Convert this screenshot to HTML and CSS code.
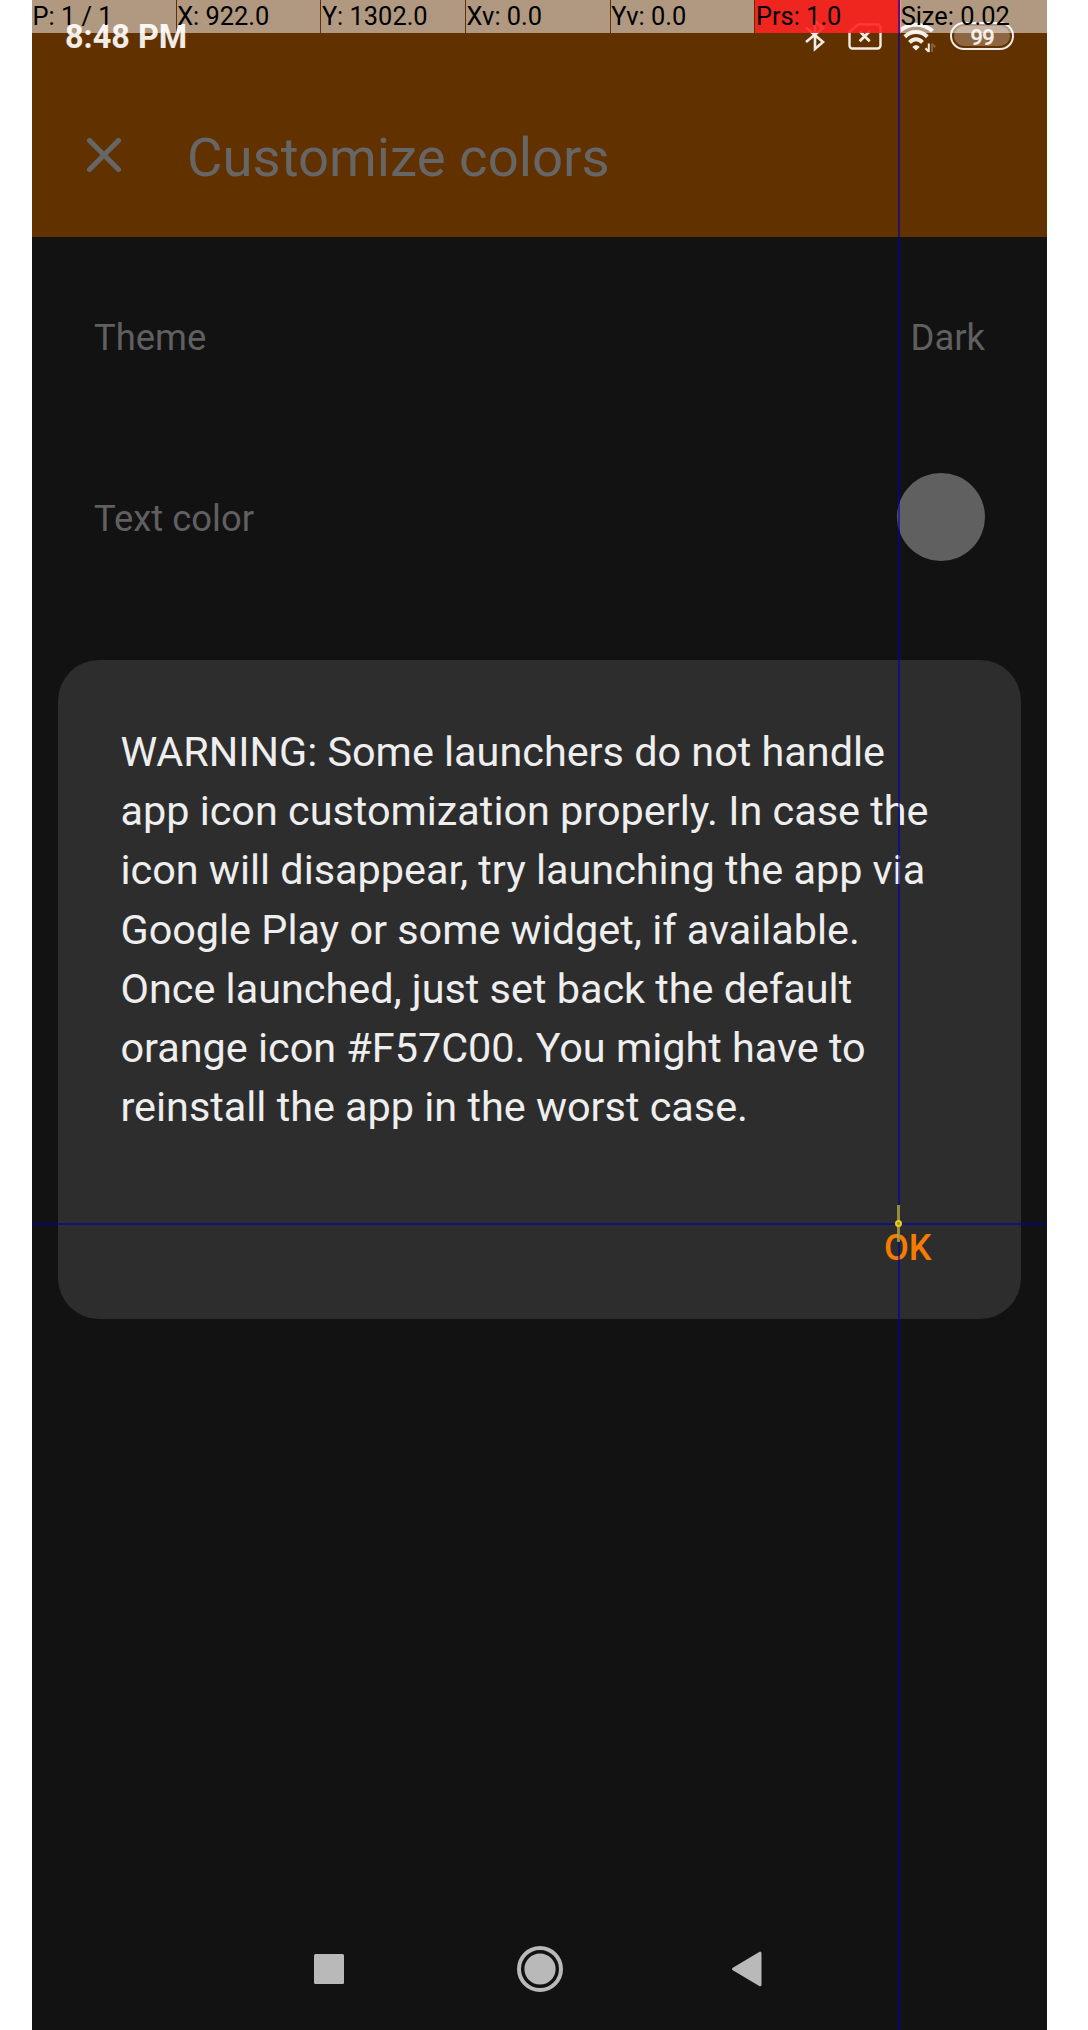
FILE: index.html
```html
<!DOCTYPE html>
<html lang="en">
<head>
<meta charset="utf-8">
<meta name="viewport" content="width=device-width, initial-scale=1">
<title>Customize colors</title>
<link rel="stylesheet" href="styles.css">
</head>
<body>
<div class="phone">
  <header class="header">
    <div class="status-bar">
      <span class="clock">8:48 PM</span>
      <div class="status-icons">
        <svg class="icon-bluetooth" width="22" height="34" viewBox="0 0 22 34" fill="none" stroke="currentColor" stroke-width="2.6"><path d="M2 9.5 19 24 11 31V3l8 7L2 24"/></svg>
        <svg class="icon-sim" width="34" height="27" viewBox="0 0 34 27" fill="none" stroke="currentColor" stroke-width="2.4"><path d="M10 1.4h19.5a3 3 0 0 1 3 3V22.5a3 3 0 0 1-3 3h-25a3 3 0 0 1-3-3V9z"/><path d="m11.7 8.3 10 10m0-10-10 10" stroke-width="2.8"/></svg>
        <svg class="icon-wifi" width="38" height="32" viewBox="0 0 38 32" fill="none" stroke="currentColor" stroke-width="4"><path d="M1.5 10C11 1.5 25 1.5 34.5 10"/><path d="M6.8 15.8c6.5-6.3 16-6.3 22.5 0"/><path d="M11.5 21.3c4-4 9-4 13 0"/><path d="m14.3 26 3.7 3.5 3.7-3.5c-2-2.3-5.4-2.3-7.4 0z" fill="currentColor" stroke="none"/><path d="M30.8 22.5v8.5m0-.2-3.3-3.5" stroke-width="2"/><path d="M34 31v-8.5m0 .2 3.3 3.5" stroke-width="2" opacity=".25"/></svg>
        <span class="battery"><span class="battery-level">99</span></span>
      </div>
    </div>
    <div class="toolbar">
      <svg width="36" height="36" viewBox="0 0 36 36" fill="none" stroke="currentColor" stroke-width="5.2" stroke-linecap="round"><path d="m3.5 3.5 29 29m0-29-29 29"/></svg>
      <h1 class="title">Customize colors</h1>
    </div>
  </header>
  <main class="settings">
    <div class="row row-theme"><span class="label">Theme</span><span class="label">Dark</span></div>
    <div class="row row-color"><span class="label">Text color</span><span class="swatch"></span></div>
    <section class="dialog" role="dialog">
      <p class="message">WARNING: Some launchers do not handle<br>app icon customization properly. In case the<br>icon will disappear, try launching the app via<br>Google Play or some widget, if available.<br>Once launched, just set back the default<br>orange icon #F57C00. You might have to<br>reinstall the app in the worst case.</p>
      <button class="ok">OK</button>
    </section>
  </main>
  <nav class="nav-bar">
    <svg width="30" height="30" viewBox="0 0 30 30" fill="currentColor"><rect width="30" height="30" rx="1.5"/></svg>
    <svg width="46" height="46" viewBox="0 0 46 46" fill="currentColor"><circle cx="23" cy="23" r="21" fill="none" stroke="currentColor" stroke-width="4"/><circle cx="23" cy="23" r="15.6"/></svg>
    <svg class="icon-back" width="30" height="36" viewBox="0 0 30 36" fill="currentColor" stroke="currentColor" stroke-width="3" stroke-linejoin="round"><path d="M1.6 18 28 2.2v31.6z"/></svg>
  </nav>
  <div class="pointer-bar">
    <span>P: 1 / 1</span><span>X: 922.0</span><span>Y: 1302.0</span><span>Xv: 0.0</span><span>Yv: 0.0</span><span class="pressure">Prs: 1.0</span><span>Size: 0.02</span>
  </div>
  <div class="guide guide-x"></div>
  <div class="guide guide-y"></div>
  <div class="touch-trail"></div>
  <div class="touch-dot"></div>
</div>
</body>
</html>
```
FILE: styles.css
```css
* { box-sizing: border-box; }
body { margin: 0; background: #fff; font-family: Roboto, sans-serif; }
svg { display: block; flex: none; }
.phone {
  position: relative;
  display: flex;
  flex-direction: column;
  width: 1015px;
  height: 2030px;
  margin-left: 32px;
  background: #121212;
  overflow: hidden;
}
.header { height: 237px; background: #623100; }
.status-bar {
  display: flex;
  justify-content: space-between;
  height: 75px;
  padding: 0 33px;
  color: #f2ece7;
}
.clock { margin-top: 18px; font-size: 32.4px; line-height: 38px; font-weight: 700; white-space: nowrap; }
.status-icons { display: flex; align-items: flex-start; }
.icon-bluetooth { margin: 18px 22px 0 0; }
.icon-sim { margin: 22.5px 16px 0 0; }
.icon-wifi { margin: 21px 14px 0 0; }
.battery {
  width: 64px;
  height: 28px;
  margin-top: 22px;
  padding: 2px;
  border: 2.5px solid #f2ece7;
  border-radius: 14px;
}
.battery-level {
  display: block;
  height: 20px;
  border-radius: 10px;
  background: #8d6743;
  font-size: 22.5px;
  line-height: 22px;
  font-weight: 600;
  letter-spacing: -1px;
  text-align: center;
}
.toolbar {
  display: flex;
  align-items: center;
  gap: 65px;
  height: 160px;
  padding: 0 54px;
  color: #666;
}
.title { margin: 3px 0 0; font-size: 54.5px; font-weight: 400; line-height: 64px; white-space: nowrap; }
.settings { flex: 1; color: #606060; font-size: 36.4px; }
.row { display: flex; align-items: center; justify-content: space-between; padding: 0 62px; }
.row-theme { height: 198px; }
.row-color { height: 164px; }
.label { padding-top: 2px; }
.swatch { width: 88px; height: 88px; border-radius: 50%; background: #606060; }
.dialog {
  display: flex;
  flex-direction: column;
  width: 963px;
  height: 659px;
  margin: 61px 26px 0;
  padding: 63px 84px 0 62.5px;
  border-radius: 41px;
  background: #2d2d2d;
}
.message { margin: 0; color: #eee; font-size: 41.4px; line-height: 59.2px; letter-spacing: -.02px; white-space: nowrap; }
.ok {
  align-self: flex-end;
  margin: 86px 5.5px 0 0;
  padding: 0;
  border: 0;
  background: none;
  color: #f57c00;
  font: 500 36px/50px Roboto, sans-serif;
}
.nav-bar {
  display: flex;
  align-items: center;
  gap: 173px;
  height: 122px;
  padding-left: 282px;
  color: #b9b9b9;
}
.icon-back { margin-left: -4px; }
/* Pointer location readout drawn over the whole screen */
.pointer-bar {
  position: absolute;
  inset: 0 0 auto;
  display: grid;
  grid-template-columns: repeat(6, 143.7px) 1fr;
  column-gap: 1px;
  height: 33px;
  color: #000;
  font-size: 25.4px;
  line-height: 33px;
  white-space: nowrap;
}
.pointer-bar span { padding-left: .5px; background: rgba(255, 255, 255, .5); }
.pointer-bar .pressure { margin-right: -1.5px; background: rgba(255, 38, 36, .9); }
.guide { position: absolute; background: rgba(0, 0, 170, .6); }
.guide-x { top: 0; bottom: 0; left: 866px; width: 2px; }
.guide-y { left: 0; right: 0; top: 1223px; height: 2px; }
.touch-trail { position: absolute; left: 865px; top: 1205px; width: 3px; height: 37px; background: rgba(190, 180, 50, .75); }
.touch-dot { position: absolute; left: 863px; top: 1220px; width: 7px; height: 7px; border: 2px solid #e5ce18; border-radius: 50%; background: #a88c30; }
```
